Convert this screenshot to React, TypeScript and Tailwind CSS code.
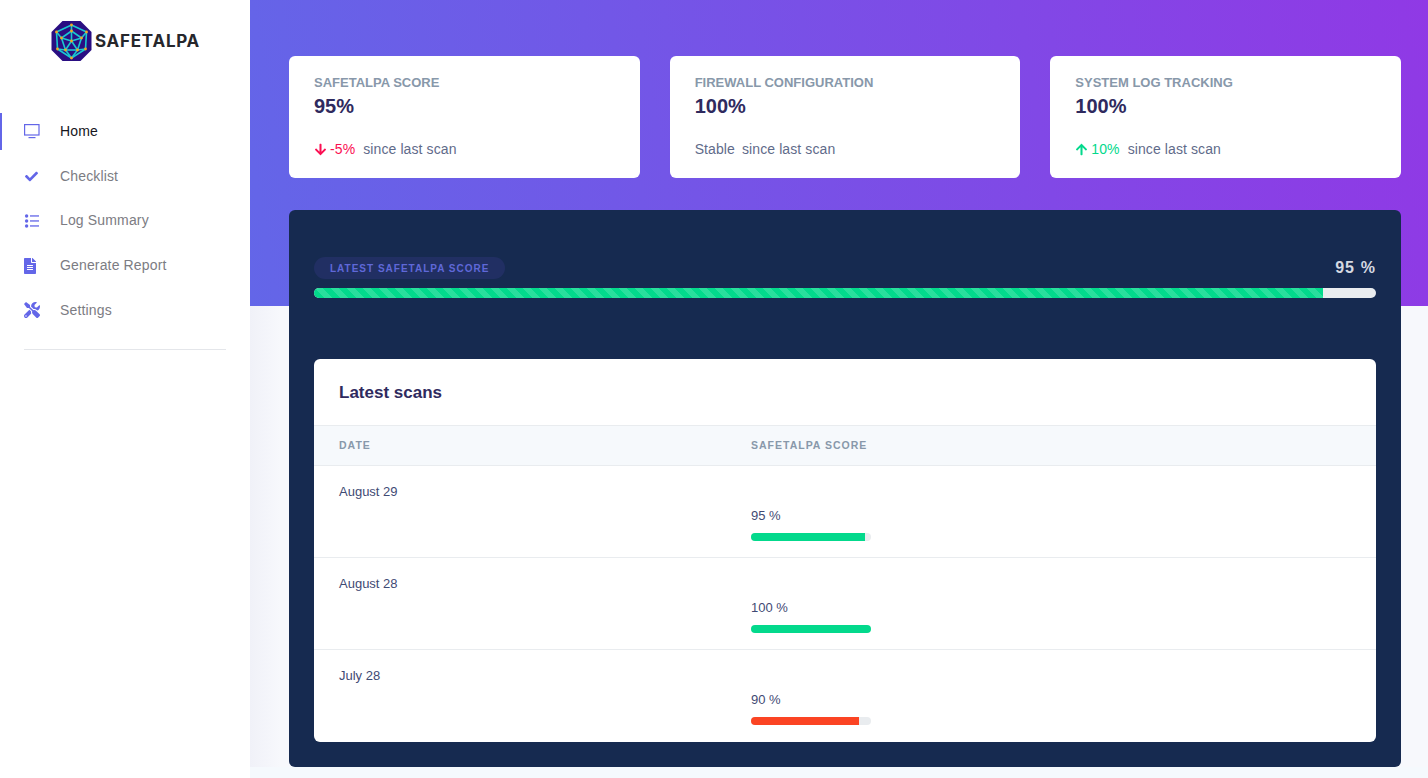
import React from "react";
import { FaArrowDown, FaArrowUp, FaCheck, FaFileAlt, FaTools } from "react-icons/fa";

const SANS = "font-['Liberation_Sans',Arial,sans-serif]";

function Logo() {
	const pts: [number, number][] = [
		[20, 4], [20, 10], [10, 17], [30, 17], [20, 20], [14, 29], [26, 29], [20, 37], [5, 11], [35, 11], [6, 28], [34, 28],
	];
	const lines = [
		"M20 4L20 20", "M20 10L10 17", "M20 10L30 17", "M10 17L20 20", "M30 17L20 20", "M10 17L14 29", "M30 17L26 29",
		"M20 20L14 29", "M20 20L26 29", "M14 29L26 29", "M14 29L20 37", "M26 29L20 37", "M5 11L10 17", "M35 11L30 17",
		"M5 11L20 4", "M35 11L20 4", "M6 28L14 29", "M34 28L26 29", "M5 11L6 28", "M35 11L34 28", "M6 28L20 37", "M34 28L20 37",
	];
	return (
		<svg width="41" height="40" viewBox="0 0 40 40" className="shrink-0">
			<polygon points="11,0 29,0 40,11 40,29 29,40 11,40 0,29 0,11" fill="#2a0e82" />
			{lines.map((d) => (
				<path key={d} d={d} stroke="#19c8d0" strokeWidth="1.6" fill="none" />
			))}
			{pts.map(([x, y]) => (
				<circle key={`${x}-${y}`} cx={x} cy={y} r="1.4" fill="#f5a623" />
			))}
		</svg>
	);
}

function MonitorIcon() {
	return (
		<svg width="16" height="16" viewBox="0 0 16 16" fill="none" stroke="#6366e8" strokeWidth="1.2">
			<rect x="0.6" y="1.6" width="14.4" height="10.4" />
			<path d="M4.5 14.6H11.5" />
		</svg>
	);
}

function ListIcon() {
	return (
		<svg width="16" height="16" viewBox="0 0 16 16" fill="#6366e8">
			<circle cx="2.6" cy="3" r="1.7" />
			<circle cx="2.6" cy="8" r="1.7" />
			<circle cx="2.6" cy="13" r="1.7" />
			<rect x="6" y="2.3" width="9" height="1.3" />
			<rect x="6" y="7.3" width="9" height="1.3" />
			<rect x="6" y="12.3" width="9" height="1.3" />
		</svg>
	);
}

const navItems = [
	{ label: "Home", icon: <MonitorIcon />, active: true },
	{ label: "Checklist", icon: <FaCheck size={13} className="ml-[1px]" /> },
	{ label: "Log Summary", icon: <ListIcon /> },
	{ label: "Generate Report", icon: <FaFileAlt className="w-[12px] h-[16px]" /> },
	{ label: "Settings", icon: <FaTools size={16} /> },
];

function Sidebar() {
	return (
		<aside className="w-[250px] shrink-0 h-[778px] bg-white flex flex-col">
			<div className="h-[112.75px] shrink-0 pl-[51px] pt-[21px] flex items-start gap-[3px]">
				<Logo />
				<span className="font-['Inter',sans-serif] font-bold text-[17px] leading-[40px] tracking-[0.75px] text-[#26272c]">
					SAFETALPA
				</span>
			</div>
			<nav className="flex flex-col gap-[7.75px]">
				{navItems.map((item) => (
					<div
						key={item.label}
						className={`h-[37px] flex items-center border-l-2 pl-[22px] text-[14px] tracking-[0.15px] ${
							item.active ? "border-[#6366e8] text-[#16161d]" : "border-transparent text-[#7c7c83]"
						}`}
					>
						<span className="w-[36px] text-[#6366e8] flex">{item.icon}</span>
						<span>{item.label}</span>
					</div>
				))}
			</nav>
			<div className="mx-6 mt-[20.5px] border-t border-[#e4e6ea]" />
		</aside>
	);
}

type Stat = {
	title: string;
	value: string;
	delta: string;
	tone: "down" | "up" | "flat";
};

const stats: Stat[] = [
	{ title: "SAFETALPA SCORE", value: "95%", delta: "-5%", tone: "down" },
	{ title: "FIREWALL CONFIGURATION", value: "100%", delta: "Stable", tone: "flat" },
	{ title: "SYSTEM LOG TRACKING", value: "100%", delta: "10%", tone: "up" },
];

function StatCard({ stat }: { stat: Stat }) {
	return (
		<div className="h-[122px] bg-white rounded-md px-[25px] pt-[19px]">
			<div className="text-[13px] leading-[16px] font-bold text-[#8898aa]">{stat.title}</div>
			<div className="mt-[3px] text-[20px] leading-[24px] font-bold text-[#2f2a5e]">{stat.value}</div>
			<div className="mt-[21px] flex items-center text-[14px] leading-[20px] tracking-[0.1px] text-[#5f6b8a]">
				{stat.tone === "down" && (
					<span className="flex items-center gap-[3px] text-[#fb0f52] mr-2">
						<FaArrowDown size={13} />
						{stat.delta}
					</span>
				)}
				{stat.tone === "up" && (
					<span className="flex items-center gap-[3px] text-[#03d98c] mr-2">
						<FaArrowUp size={13} />
						{stat.delta}
					</span>
				)}
				{stat.tone === "flat" && <span className="mr-[7px]">{stat.delta}</span>}
				<span>since last scan</span>
			</div>
		</div>
	);
}

const scans = [
	{ date: "August 29", score: 95, color: "bg-[#03d98c]" },
	{ date: "August 28", score: 100, color: "bg-[#03d98c]" },
	{ date: "July 28", score: 90, color: "bg-[#fb4423]" },
];

function ScansTable() {
	return (
		<div className="bg-white rounded-md overflow-hidden">
			<div className="h-[66px] px-[25px] pt-[1px] flex items-center text-[17px] font-bold text-[#2f2a5e]">Latest scans</div>
			<div className="h-[41px] flex items-center bg-[#f6f9fc] border-y border-[#e9ecef] text-[10.5px] font-bold tracking-[1px] text-[#8898aa]">
				<div className="w-[437px] pl-[25px]">DATE</div>
				<div>SAFETALPA SCORE</div>
			</div>
			{scans.map((scan) => (
				<div key={scan.date} className="h-[92px] flex border-b border-[#e9ecef] last:border-b-0 text-[13px] text-[#3f4a74]">
					<div className="w-[437px] pl-[25px] pt-[18px] leading-[16px]">{scan.date}</div>
					<div className="pt-[42px]">
						<div className="leading-[16px]">{scan.score} %</div>
						<div className="mt-[9px] w-[120px] h-[8px] rounded-full bg-[#e9ecef] overflow-hidden">
							<div className={`h-full ${scan.color}`} style={{ width: `${scan.score}%` }} />
						</div>
					</div>
				</div>
			))}
		</div>
	);
}

export default function App() {
	return (
		<div className={`flex w-[1428px] h-[778px] overflow-hidden bg-[#f5f9fd] ${SANS}`}>
			<Sidebar />
			<main className="flex-1 min-w-0 h-[767px] bg-[linear-gradient(90deg,#f0f1f8_0px,#f7f8fc_30px)]">
				<div className="h-[306px] pl-[39px] pr-[27px] pt-[56px] bg-[linear-gradient(80deg,#6366e8_0%,#9039e5_100%)]">
					<div className="grid grid-cols-3 gap-[30px]">
						{stats.map((s) => (
							<StatCard key={s.title} stat={s} />
						))}
					</div>
				</div>
				<div className="ml-[39px] mr-[27px] -mt-[96px] relative h-[557px] rounded-md bg-[#162a50] px-[25px] pt-[47px]">
					<div className="flex items-center justify-between h-[22px]">
						<span className="h-[22px] px-[16px] rounded-full bg-[#212f63] text-[#5f68d8] text-[10px] font-bold tracking-[1px] leading-[23px]">
							LATEST SAFETALPA SCORE
						</span>
						<span className="text-[16px] font-bold text-[#d5d9e2] tracking-[1.1px]">95 %</span>
					</div>
					<div className="mt-[9px] h-[10px] rounded-md bg-[#e9ecef] overflow-hidden">
						<div className="h-full w-[95%] bg-[#03d98c] bg-[linear-gradient(45deg,rgba(255,255,255,.15)_25%,transparent_25%,transparent_50%,rgba(255,255,255,.15)_50%,rgba(255,255,255,.15)_75%,transparent_75%,transparent)] bg-[length:16px_16px]" />
					</div>
					<div className="mt-[61px]">
						<ScansTable />
					</div>
				</div>
			</main>
		</div>
	);
}
